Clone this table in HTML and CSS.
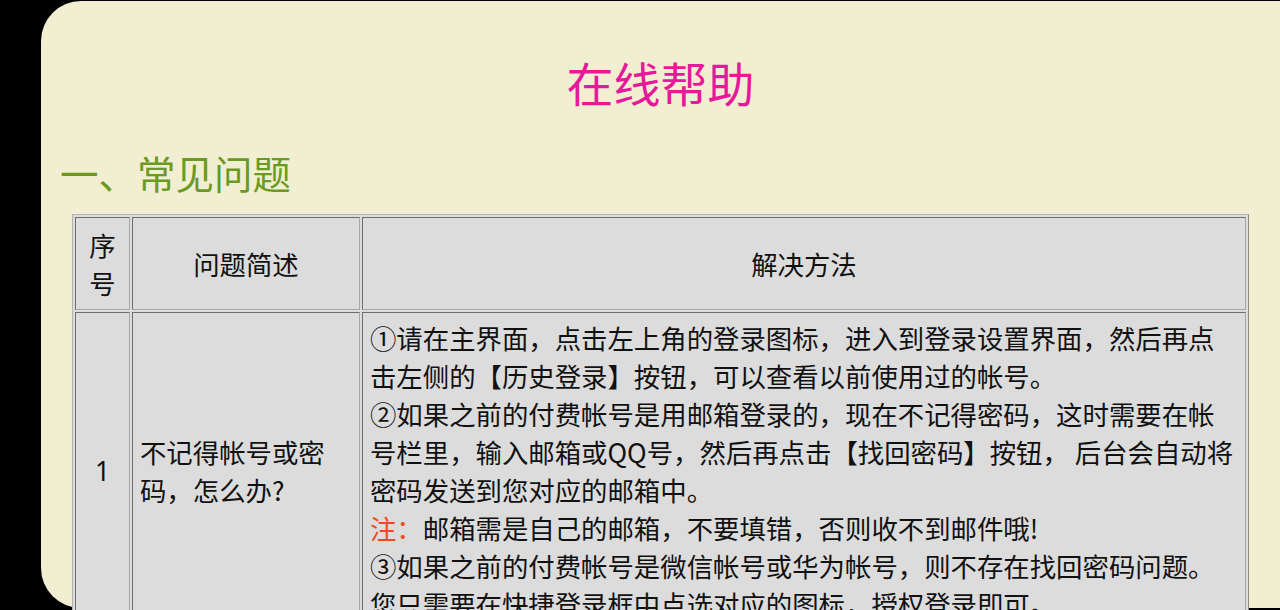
FILE: index.html
```html
<!DOCTYPE html>
<html lang="zh-CN">
<head>
<meta charset="utf-8">
<title>在线帮助</title>
<link rel="stylesheet" href="styles.css">
</head>
<body>
<div class="card">
  <h1 class="title">在线帮助</h1>
  <h2 class="section">一、常见问题</h2>
  <table class="faq">
    <colgroup>
      <col class="c-no">
      <col class="c-q">
      <col class="c-a">
    </colgroup>
    <thead>
      <tr class="head">
        <td class="center">序号</td>
        <td class="center">问题简述</td>
        <td class="center">解决方法</td>
      </tr>
    </thead>
    <tbody>
      <tr>
        <td class="center num">1</td>
        <td>不记得帐号或密码，怎么办?</td>
        <td>①请在主界面，点击左上角的登录图标，进入到登录设置界面，然后再点击左侧的【历史登录】按钮，可以查看以前使用过的帐号。<br>②如果之前的付费帐号是用邮箱登录的，现在不记得密码，这时需要在帐号栏里，输入邮箱或QQ号，然后再点击【找回密码】按钮， 后台会自动将密码发送到您对应的邮箱中。<br><span class="note">注：</span>邮箱需是自己的邮箱，不要填错，否则收不到邮件哦!<br>③如果之前的付费帐号是微信帐号或华为帐号，则不存在找回密码问题。您只需要在快捷登录框中点选对应的图标，授权登录即可。</td>
      </tr>
    </tbody>
  </table>
</div>
</body>
</html>
```

FILE: styles.css
```css
html, body {
  margin: 0;
  padding: 0;
  background: #000;
  height: 100%;
  overflow: hidden;
}

body {
  font-family: "Noto Sans CJK SC", "Noto Sans", sans-serif;
  color: #111;
}

.card {
  margin-left: 41px;
  margin-top: 1px;
  height: 607px;
  background: #f2eed2;
  border-radius: 40px 0 0 40px;
  padding-top: 53px;
  box-sizing: border-box;
}

.title {
  margin: 0;
  text-align: center;
  font-size: 47px;
  line-height: 56px;
  font-weight: normal;
  color: #e8189a;
}

.section {
  margin: 39px 0 19px 19px;
  font-size: 38.5px;
  line-height: 46px;
  font-weight: normal;
  color: #6b9b1e;
}

.faq {
  width: 95%;
  margin: 0 auto;
  table-layout: fixed;
  border-collapse: separate;
  border-spacing: 2px;
  border: 1px solid;
  border-color: #b4b4b4 #8a8a8a #8a8a8a #b4b4b4;
  background: #dcdcdc;
  font-size: 26.4px;
  line-height: 38px;
}

.c-no { width: 55px; }
.c-q { width: 228px; }

.faq td {
  border: 1px solid;
  border-color: #6e6e6e #a8a8a8 #a8a8a8 #6e6e6e;
  padding: 6px 7px;
  vertical-align: middle;
  text-align: left;
}

.faq td.center {
  text-align: center;
}

.faq td.num {
  font-family: "Noto Sans", "Noto Sans CJK SC", sans-serif;
}

.head td {
  height: 79px;
}

.note {
  color: #f04a1e;
}
```
